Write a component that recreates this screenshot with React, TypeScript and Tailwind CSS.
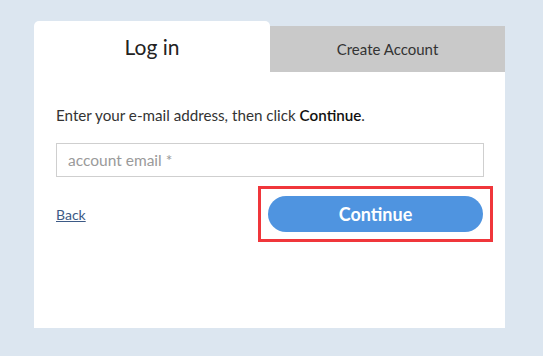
import React from "react";

export default function App() {
  return (
    <div className="h-[356px] w-full bg-[#dce6f0] pt-[21px] pl-[34px] font-['Lato',sans-serif]">
      <div className="w-[471px] h-[307px] bg-white">
        <div className="flex bg-[#dce6f0]">
          <div className="w-[236px] h-[51px] bg-white rounded-t-[5px] flex items-center justify-center text-[21px] text-[#222]">
            Log in
          </div>
          <div className="flex-1 mt-[5px] h-[46px] bg-[#c9c9c9] flex items-center justify-center text-[15px] text-[#333]">
            Create Account
          </div>
        </div>
        <div className="px-[22px] pt-[34px]">
          <p className="text-[15.2px] leading-[18px] text-[#333]">
            Enter your e-mail address, then click <b className="font-semibold text-[#111]">Continue</b>.
          </p>
          <input
            className="mt-[19px] w-[428px] h-[34px] border border-[#cfcfcf] px-[11px] text-[15.5px] text-[#333] placeholder:text-[#9a9a9a] outline-none"
            placeholder="account email *"
          />
          <div className="mt-[9px] flex items-center justify-between">
            <a href="#" className="text-[14px] text-[#3d5a86] underline">
              Back
            </a>
            <div className="mr-[-10px] p-[7px] border-[3px] border-[#f0363b]">
              <button className="w-[215px] h-[36px] rounded-full bg-[#4f94e0] text-white font-bold text-[18px]">
                Continue
              </button>
            </div>
          </div>
        </div>
      </div>
    </div>
  );
}
